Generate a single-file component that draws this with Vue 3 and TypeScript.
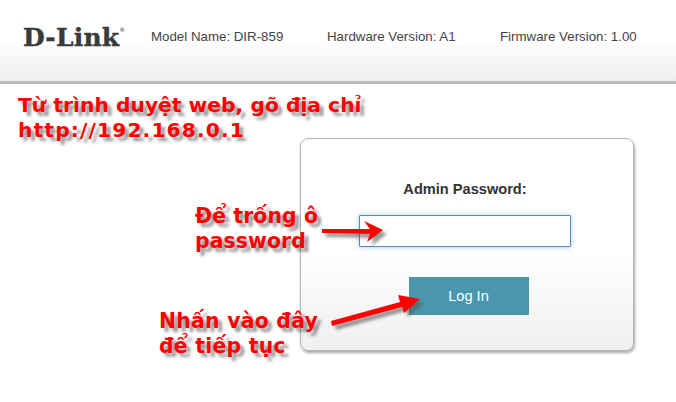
<template>
  <div class="page">
    <header class="header">
      <div class="logo">D-Link<sup class="reg">®</sup></div>
      <div class="info">
        <span class="model">Model Name: DIR-859</span>
        <span class="hardware">Hardware Version: A1</span>
        <span class="firmware">Firmware Version: 1.00</span>
      </div>
    </header>

    <main class="content">
      <form class="card" @submit.prevent>
        <label class="label" for="pw">Admin Password:</label>
        <input id="pw" v-model="password" class="input" type="password" />
        <button class="login" type="submit">Log In</button>
      </form>
    </main>

    <p class="note note-url">Từ trình duyệt web, gõ địa chỉ<br /><span class="url">http://192.168.0.1</span></p>
    <p class="note note-empty">Để trống ô<br />password</p>
    <p class="note note-next">Nhấn vào đây<br />để tiếp tục</p>

    <svg class="arrows" width="676" height="402" viewBox="0 0 676 402">
      <defs>
        <filter id="soft" x="-30%" y="-50%" width="160%" height="200%">
          <feGaussianBlur stdDeviation="1.6" />
        </filter>
      </defs>
      <g v-for="a in arrows" :key="a">
        <path :d="a" transform="translate(4 4)" fill="#555" opacity="0.6" filter="url(#soft)" />
        <path :d="a" fill="#f00" />
      </g>
    </svg>
  </div>
</template>

<script setup lang="ts">
import { ref } from 'vue'

const password = ref('')

const arrows = [
  'M322 229 L370 229 L364 221 L383 230 L367 242 L370 234 L322 233 Z',
  'M331 321 L400 302 L398 295 L420 299 L404 313 L402 307 L332 326 Z',
]
</script>

<style>
html,
body {
  margin: 0;
  background: #fff;
}
</style>

<style scoped>
.page {
  position: relative;
  width: 676px;
  height: 402px;
  overflow: hidden;
  background: #fff;
  font-family: 'Liberation Sans', Arial, sans-serif;
}

.header {
  display: flex;
  align-items: flex-start;
  box-sizing: border-box;
  height: 84px;
  padding: 26px 0 0 23px;
  background: linear-gradient(#fff 0, #fff 38px, #eeeeee 81px);
  border-bottom: 3px solid #bcbcbc;
}

.logo {
  width: 128px;
  color: #3a3a3a;
  font-family: 'DejaVu Serif', serif;
  font-size: 25px;
  font-weight: 700;
  line-height: 24px;
  letter-spacing: 0.2px;
  white-space: nowrap;
  -webkit-text-stroke: 0.4px #3a3a3a;
}

.reg {
  font-size: 6px;
  font-weight: 400;
  vertical-align: 14px;
  line-height: 0;
  letter-spacing: 0;
  -webkit-text-stroke: 0;
}

.info {
  display: flex;
  color: #444;
  font-size: 13.3px;
  line-height: 22px;
  white-space: nowrap;
}

.model {
  width: 176px;
}

.hardware {
  width: 173px;
}

.content {
  display: flex;
  padding: 54px 0 0 300px;
}

.card {
  display: flex;
  flex-direction: column;
  align-items: center;
  box-sizing: border-box;
  width: 334px;
  height: 213px;
  padding: 41px 4px 0 0;
  background: linear-gradient(#fff 0, #fff 115px, #efefef 100%);
  border: 1px solid #b4b4b4;
  border-radius: 8px;
  box-shadow: 1px 2px 3px rgba(0, 0, 0, 0.35);
}

.label {
  color: #333;
  font-size: 14.6px;
  font-weight: 700;
  line-height: 18px;
}

.input {
  box-sizing: border-box;
  width: 212px;
  height: 32px;
  margin-top: 17px;
  background: #fff;
  border: 1px solid #4a90c8;
  border-radius: 1px;
  box-shadow: 0 0 5px rgba(90, 150, 210, 0.5);
  outline: none;
}

.login {
  width: 120px;
  height: 38px;
  margin: 30px 0 0 8px;
  padding: 0 1px 0 0;
  color: #fff;
  font-family: inherit;
  font-size: 14.6px;
  background: #4a96ad;
  border: 0;
}

.note {
  position: absolute;
  margin: 0;
  color: #f00;
  font-family: 'DejaVu Sans', Verdana, sans-serif;
  font-size: 20.4px;
  font-weight: 700;
  line-height: 25px;
  white-space: nowrap;
  text-shadow: 4px 4px 3px rgba(70, 70, 70, 0.55);
}

.note-url {
  top: 93px;
  left: 18px;
  font-size: 20.3px;
}

.url {
  letter-spacing: 1.1px;
}

.note-empty {
  top: 204px;
  left: 195px;
  letter-spacing: 0.1px;
}

.note-next {
  top: 309px;
  left: 159px;
  letter-spacing: 0.25px;
}

.arrows {
  position: absolute;
  top: 0;
  left: 0;
  pointer-events: none;
}
</style>
